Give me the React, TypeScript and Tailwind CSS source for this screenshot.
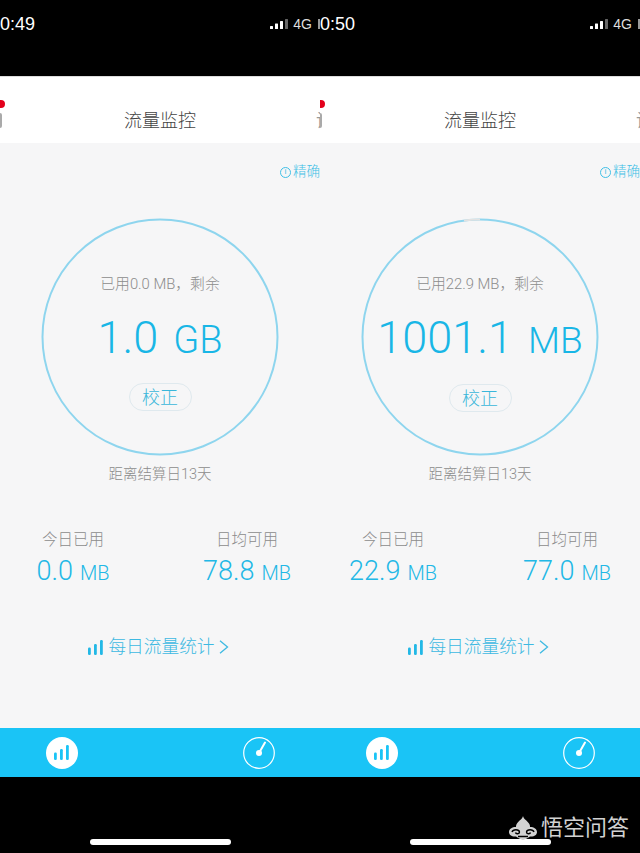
const SANS = 'font-["Roboto","Noto_Sans_CJK_SC",sans-serif]';

function Bars({ className }: { className?: string }) {
  return (
    <svg viewBox="0 0 15 15" className={className} fill="currentColor">
      <rect x="0" y="7.5" width="2.8" height="7.5" rx="1.2" />
      <rect x="6" y="4" width="2.8" height="11" rx="1.2" />
      <rect x="12" y="0" width="2.8" height="15" rx="1.2" />
    </svg>
  );
}

function StatusBar({ time }: { time: string }) {
  return (
    <div className="h-[76px] bg-black flex items-start justify-between pt-[15px] text-white">
      <span className='text-[18px] leading-[18px] font-["Liberation_Sans",sans-serif]'>{time}</span>
      <div className="flex items-center h-[18px]">
        <svg viewBox="0 0 18 10" className="w-[18px] h-[10px]">
          <rect x="0" y="7" width="3" height="3" rx="0.5" fill="#fff" />
          <rect x="5" y="4.5" width="3" height="5.5" rx="0.5" fill="#fff" />
          <rect x="10" y="2" width="3" height="8" rx="0.5" fill="#fff" />
          <rect x="15" y="0" width="3" height="10" rx="0.5" fill="#666" />
        </svg>
        <span className='ml-[5px] text-[14px] font-["Liberation_Sans",sans-serif] text-[#ddd]'>4G</span>
        <div className="ml-[6px] w-[2px] h-[10px] bg-[#999]" />
      </div>
    </div>
  );
}

function Header() {
  return (
    <div className="relative h-[67px] bg-white border-t border-[#ddd] grid grid-cols-[1fr_auto_1fr] items-center pt-[21px]">
      <div className="relative h-full flex items-center">
        <div className="w-[2px] h-[15px] rounded-r-full bg-[#aaa]" />
      </div>
      <span className="text-[18px] text-[#444] leading-none font-light">流量监控</span>
      <div className="flex justify-end">
        <div className="w-[4px] overflow-hidden">
          <span className="block text-[18px] text-[#999] leading-none whitespace-nowrap">设置</span>
        </div>
      </div>
      <div className="absolute left-[-5px] top-[23px] w-[10px] h-[8px] rounded-full bg-[#e3001b]" />
    </div>
  );
}

function Ring({ used }: { used?: boolean }) {
  return (
    <svg viewBox="0 0 238 238" className="absolute inset-0 w-full h-full">
      <circle cx="119" cy="119" r="117.5" fill="none" stroke="#8ed5ee" strokeWidth="2" />
      {used && (
        <path d="M103 2.6 A117.5 117.5 0 0 1 119 1.5" fill="none" stroke="#e2e2e2" strokeWidth="2" />
      )}
    </svg>
  );
}

function Stat({ label, value, unit }: { label: string; value: string; unit: string }) {
  return (
    <div className="flex flex-col items-center">
      <span className="text-[15.5px] leading-[20px] text-[#8c8c8c] font-light">{label}</span>
      <div className="mt-[7px] flex items-baseline gap-[7px] text-[#22b8e6] leading-[28px] whitespace-nowrap">
        <span className="text-[27px] font-light">{value}</span>
        <span className="text-[20px] font-light">{unit}</span>
      </div>
    </div>
  );
}

function Panel(props: {
  time: string;
  usedText: string;
  big: string;
  unit: string;
  unitSize: string;
  today: string;
  daily: string;
  used?: boolean;
}) {
  return (
    <div className={`relative w-[320px] h-[853px] flex flex-col overflow-hidden ${SANS}`}>
      <StatusBar time={props.time} />
      <Header />

      <div className="flex-1 bg-[#f6f6f7] flex flex-col items-center relative">
        <div className="self-end pt-[20px] flex items-center w-[40px] overflow-hidden h-[38px] text-[#3fbfe6]">
          <div className="w-[11px] h-[11px] rounded-full border border-[#3fbfe6] flex items-center justify-center text-[8px] leading-none shrink-0">i</div>
          <span className="ml-[2px] text-[13.5px] leading-none whitespace-nowrap font-light">精确统计</span>
        </div>

        <div className="relative mt-[37px] w-[238px] h-[238px] flex flex-col items-center">
          <Ring used={props.used} />
          <span className="mt-[57px] text-[14.8px] leading-[18px] text-[#8c8c8c] whitespace-nowrap font-light">
            {props.usedText}
          </span>
          <div className="mt-[17px] flex items-baseline gap-[15px] text-[#19b6e6] font-light leading-[56px] whitespace-nowrap">
            <span className="text-[45px]">{props.big}</span>
            <span className={props.unitSize}>{props.unit}</span>
          </div>
          <div className="mt-[15px] w-[63px] h-[28px] rounded-full border border-[#dfe9ee] flex items-center justify-center text-[18px] text-[#3ab6da] font-light">
            校正
          </div>
        </div>

        <span className="mt-[10px] text-[14.5px] leading-[18px] text-[#8c8c8c] font-light">距离结算日13天</span>

        <div className="mt-[46px] w-full grid grid-cols-[146px_146px] gap-[28px]">
          <Stat label="今日已用" value={props.today} unit="MB" />
          <Stat label="日均可用" value={props.daily} unit="MB" />
        </div>

        <div className="mt-[48px] pr-[3px] flex items-center text-[#3db9e2]">
          <Bars className="w-[15px] h-[15px] text-[#22b8e6]" />
          <span className="ml-[5px] text-[17.7px] leading-[24px] font-light">每日流量统计</span>
          <svg viewBox="0 0 10 14" className="ml-[4px] w-[10px] h-[14px]" fill="none" stroke="currentColor" strokeWidth="1.3">
            <path d="M1 0.8 L8.5 7 L1 13.2" />
          </svg>
        </div>
      </div>

      <div className="h-[49px] bg-[#1ac4f6] flex items-center justify-between pl-[46px] pr-[45px]">
        <div className="w-[32px] h-[32px] rounded-full bg-white flex items-center justify-center pr-[2px]">
          <Bars className="w-[15px] h-[15px] text-[#1ac4f6]" />
        </div>
        <svg viewBox="0 0 32 32" className="w-[32px] h-[32px]" fill="none" stroke="#fff">
          <circle cx="16" cy="16" r="15.3" strokeWidth="1.2" />
          <path d="M16 16 L22 5.5" strokeWidth="2" strokeLinecap="round" />
          <circle cx="16" cy="16" r="3" fill="#fff" stroke="none" />
        </svg>
      </div>

      <div className="h-[76px] bg-black flex flex-col items-center justify-end pb-[8px]">
        <div className="w-[141px] h-[6px] rounded-full bg-white" />
      </div>
    </div>
  );
}

export default function App() {
  return (
    <div className="relative w-[640px] h-[853px] flex overflow-hidden bg-black">
      <Panel time="0:49" usedText="已用0.0 MB，剩余" big="1.0" unit="GB" unitSize="text-[38px]" today="0.0" daily="78.8" />
      <Panel time="0:50" usedText="已用22.9 MB，剩余" big="1001.1" unit="MB" unitSize="text-[37px]" today="22.9" daily="77.0" used />
      <div className={`absolute right-[11px] bottom-[13px] flex items-center gap-[4px] text-[#d2d2d2] ${SANS}`}>
        <svg viewBox="0 0 28 24" className="w-[28px] h-[24px]">
          <path
            fill="#d2d2d2"
            d="M14 0 C14.5 3 18 4.5 20 7.5 C21 9 21 10 21 11 C25 11 28 13 28 16 C28 19 25 21 21 20.5 C19 22 17 23 14 24 C11 23 9 22 7 20.5 C3 21 0 19 0 16 C0 13 3 11 7 11 C7 10 7 9 8 7.5 C10 4.5 13.5 3 14 0 Z"
          />
          <path
            fill="none"
            stroke="#000"
            strokeWidth="1.4"
            d="M3 16 C4 13 10 13 10.5 16 C10.5 18 7 18.5 6.5 16.5 M25 16 C24 13 18 13 17.5 16 C17.5 18 21 18.5 21.5 16.5 M9 20.5 H19"
          />
        </svg>
        <span className="text-[22px] leading-none">悟空问答</span>
      </div>
    </div>
  );
}
